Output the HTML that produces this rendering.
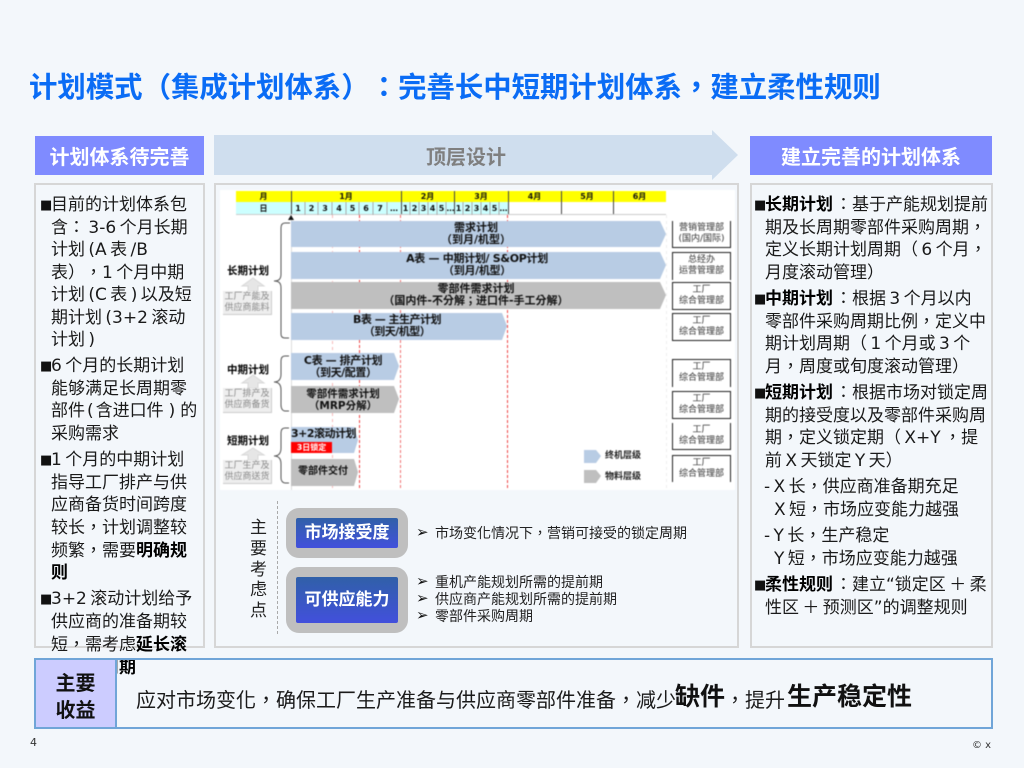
<!DOCTYPE html>
<html lang="zh-TW"><head><meta charset="utf-8"><style>
html,body{margin:0;padding:0;width:1024px;height:768px;overflow:hidden;background:#f3f7fb}
body{position:relative;font-family:"DejaVu Sans","Noto Sans CJK TC",sans-serif;color:#111;text-spacing-trim:space-all;font-kerning:none}
.a{position:absolute}
.t{position:absolute;white-space:nowrap;line-height:1}
.c{transform:translateX(-50%);text-align:center}
.l{font-size:17px;color:#1a1a1a;word-spacing:-2px;margin-top:2px}
.q{display:inline-block;width:11px;font-size:13px;vertical-align:1px;color:#111}
b{font-weight:bold;color:#000}
.k{margin-right:2px}
.panel{position:absolute;border:2px solid #d6d6d6;box-sizing:border-box;top:183px;height:465px}
.head{position:absolute;top:136px;height:39px;background:#7f8bff;color:#fff;font-weight:bold;font-size:20px;line-height:43px;text-align:center}
.d{font-size:8px;font-weight:bold;text-align:center;line-height:12px;position:absolute;top:203px;height:12px}
.m{position:absolute;top:191px;font-size:8px;font-weight:bold;line-height:12px;text-align:center;height:11px}
.bt{font-size:11px;font-weight:bold;text-align:center;line-height:12px;color:#111}
.rb{position:absolute;left:672px;width:59px;border:1px solid #222;box-sizing:border-box;font-size:9px;text-align:center;line-height:11px;background:#fff;color:#333;padding-top:2px}
.lb{font-size:10.500px;font-weight:bold;color:#000}
.gb{position:absolute;left:223px;width:49px;background:#eee;border-right:1px solid #ccc;border-bottom:1px solid #ccc;box-sizing:border-box;font-size:9px;line-height:11px;text-align:center;color:#888;padding-top:1px}
.inner{position:absolute;left:296px;width:102px;background:linear-gradient(#3060a8,#4250dc);color:#fff;font-weight:bold;font-size:17px;text-align:center;border-radius:2px}
.gray{position:absolute;left:286px;width:122px;background:#bfbfbf;border-radius:13px}
.s{font-size:14px;color:#222}
.ar{font-size:15px;color:#111}
</style></head><body>

<div class="t" style="left:29px;top:74px;font-size:28.400px;font-weight:bold;color:#0a6cf5">计划模式（集成计划体系）：完善长中短期计划体系，建立柔性规则</div>

<div class="head" style="left:35px;width:169px">计划体系待完善</div>
<svg class="a" style="left:214px;top:130px" width="525" height="51"><path d="M0 5H498V0L524 25L498 50V45H0Z" fill="#cfdeee"/></svg>
<div class="t c" style="left:466px;top:147px;font-size:20px;font-weight:bold;color:#7f7f7f">顶层设计</div>
<div class="head" style="left:750px;width:242px">建立完善的计划体系</div>

<div class="panel" style="left:34px;width:171px"></div>
<div class="panel" style="left:214px;width:525px"></div>
<div class="panel" style="left:750px;width:243px"></div>

<!-- left text -->
<div class="t l" style="left:40px;top:195px"><span class="q">■</span>目前的计划体系包</div>
<div class="t l" style="left:51px;top:218px">含： 3-6 个月长期</div>
<div class="t l" style="left:51px;top:240px">计划 (A 表 /B</div>
<div class="t l" style="left:51px;top:263px">表），1 个月中期</div>
<div class="t l" style="left:51px;top:285px">计划 (C 表 ) 以及短</div>
<div class="t l" style="left:51px;top:308px">期计划 (3+2 滚动</div>
<div class="t l" style="left:51px;top:330px">计划 )</div>
<div class="t l" style="left:40px;top:356px"><span class="q">■</span>6 个月的长期计划</div>
<div class="t l" style="left:51px;top:379px">能够满足长周期零</div>
<div class="t l" style="left:51px;top:401px">部件<span style="margin:0 2px">(</span>含进口件<span style="margin:0 5px">)</span>的</div>
<div class="t l" style="left:51px;top:424px">采购需求</div>
<div class="t l" style="left:40px;top:450px"><span class="q">■</span>1 个月的中期计划</div>
<div class="t l" style="left:51px;top:473px">指导工厂排产与供</div>
<div class="t l" style="left:51px;top:495px">应商备货时间跨度</div>
<div class="t l" style="left:51px;top:518px">较长，计划调整较</div>
<div class="t l" style="left:51px;top:541px">频繁，需要<b>明确规</b></div>
<div class="t l" style="left:51px;top:563px"><b>则</b></div>
<div class="t l" style="left:40px;top:589px"><span class="q">■</span>3+2 滚动计划给予</div>
<div class="t l" style="left:51px;top:612px">供应商的准备期较</div>
<div class="t l" style="left:51px;top:635px">短，需考虑<b>延长滚</b></div>
<div class="t l" style="left:51px;top:658px"><b>动计划周期</b></div>

<!-- right text -->
<div class="t l" style="left:754px;top:195px"><span class="q">■</span><b class="k">长期计划</b>：基于产能规划提前</div>
<div class="t l" style="left:765px;top:218px">期及长周期零部件采购周期，</div>
<div class="t l" style="left:765px;top:240px">定义长期计划周期（ 6 个月，</div>
<div class="t l" style="left:765px;top:263px">月度滚动管理）</div>
<div class="t l" style="left:754px;top:289px"><span class="q">■</span><b class="k">中期计划</b>：根据 3 个月以内</div>
<div class="t l" style="left:765px;top:312px">零部件采购周期比例，定义中</div>
<div class="t l" style="left:765px;top:334px">期计划周期（ 1 个月或 3 个</div>
<div class="t l" style="left:765px;top:357px">月，周度或旬度滚动管理）</div>
<div class="t l" style="left:754px;top:383px"><span class="q">■</span><b class="k">短期计划</b>：根据市场对锁定周</div>
<div class="t l" style="left:765px;top:406px">期的接受度以及零部件采购周</div>
<div class="t l" style="left:765px;top:428px">期，定义锁定期（ X+Y ，提</div>
<div class="t l" style="left:765px;top:451px">前 X 天锁定 Y 天）</div>
<div class="t l" style="left:764px;top:477px">- X 长，供应商准备期充足</div>
<div class="t l" style="left:774px;top:500px">X 短，市场应变能力越强</div>
<div class="t l" style="left:764px;top:526px">- Y 长，生产稳定</div>
<div class="t l" style="left:774px;top:549px">Y 短，市场应变能力越强</div>
<div class="t l" style="left:754px;top:575px"><span class="q">■</span><b class="k">柔性规则</b>：建立“锁定区 ＋ 柔</div>
<div class="t l" style="left:765px;top:598px">性区 ＋ 预测区”的调整规则</div>

<!-- diagram -->
<div class="a" style="left:0;top:0;width:1024px;height:490px;filter:blur(.45px)">
<div class="a" style="left:220px;top:190px;width:515px;height:300px;background:#fff"></div>
<div class="a" style="left:236px;top:191px;width:430px;height:11px;background:#ff0"></div>
<div class="a" style="left:236px;top:202px;width:272px;height:13px;background:#ccffff"></div>
<div class="a" style="left:508px;top:202px;width:158px;height:13px;background:#fff"></div>
<svg class="a" style="left:220px;top:190px" width="515" height="300">
<g stroke="#444" stroke-width="1" fill="none">
<path d="M71.5 1V25M181.5 1V25M234.5 1V25M288.5 1V25M341.500 1V25M393.500 1V25"/>
<path d="M16 24.500H446" stroke="#ccc"/>
<path d="M85 12V25M98 12V25M112 12V25M126 12V25M139 12V25M153 12V25M167 12V25M190 12V25M199 12V25M208 12V25M217 12V25M226 12V25M243 12V25M252 12V25M261 12V25M270 12V25M279 12V25" stroke="#aaa"/>
</g>
<g fill="none">
<path d="M71.500 25V300" stroke="#ddd"/>
<path d="M112.500 25V300" stroke="#f6b8b8" stroke-dasharray="3 3"/>
<path d="M139.500 25V300" stroke="#ee4444" stroke-dasharray="3 2"/>
<path d="M180.500 25V300" stroke="#f07070" stroke-dasharray="3 2"/>
<path d="M287.500 25V300" stroke="#ee4444" stroke-dasharray="3 2"/>
<path d="M446.500 25V300" stroke="#eee" stroke-dasharray="3 3"/>
</g>
<path d="M68 30L71 25L74 30Z" fill="#111"/>
<g stroke="#555" stroke-width="1" fill="none">
<path d="M70 33H65C62 33 61 35 61 38V84C61 89 59 91 54 91C59 91 61 93 61 98V144C61 147 63 148 65 148H69"/>
<path d="M69 166H65C62 166 61 168 61 171V184C61 189 59 192 54 192C59 192 61 195 61 200V215C61 219 63 221 65 221H69"/>
<path d="M69 238H65C62 238 61 240 61 243V258C61 263 59 266 54 266C59 266 61 269 61 274V288C61 291 63 293 65 293H69"/>
</g>
<g fill="#b8cce4">
<path d="M71 31H440L446 44L440 57H71Z"/><path d="M71 62H440L446 75L440 89H71Z"/><path d="M71 123H282L287 136L282 150H71Z"/><path d="M71 163H174L179 176L174 190H71Z"/><path d="M71 237H134L138 250L134 263H71Z"/><path d="M364 260H376L381 266L376 273H364Z"/>
</g>
<g fill="#bfbfbf">
<path d="M71 92H440L446 105L440 119H71Z"/><path d="M71 196H174L179 209L174 223H71Z"/><path d="M71 269H134L138 282L134 296H71Z"/><path d="M364 280H376L381 286L376 293H364Z"/>
</g>
<g fill="#e6e6e6" stroke="#d8d8d8">
<path d="M28 101V96H22L33 88L44 96H38V101Z"/><path d="M28 198V193H22L33 185L44 193H38V198Z"/><path d="M28 270V265H22L33 258L44 265H38V270Z"/>
</g>
</svg>
<div class="t m" style="left:236px;width:55px">月</div>
<div class="t m" style="left:291px;width:110px">1月</div>
<div class="t m" style="left:401px;width:53px">2月</div>
<div class="t m" style="left:454px;width:54px">3月</div>
<div class="t m" style="left:508px;width:53px">4月</div>
<div class="t m" style="left:561px;width:52px">5月</div>
<div class="t m" style="left:613px;width:53px">6月</div>
<div class="d" style="left:236px;width:55px">日</div>
<div class="d" style="left:291px;width:14px">1</div><div class="d" style="left:305px;width:13px">2</div><div class="d" style="left:318px;width:14px">3</div><div class="d" style="left:332px;width:14px">4</div><div class="d" style="left:346px;width:13px">5</div><div class="d" style="left:359px;width:14px">6</div><div class="d" style="left:373px;width:14px">7</div><div class="d" style="left:387px;width:14px">…</div>
<div class="d" style="left:401px;width:9px">1</div><div class="d" style="left:410px;width:9px">2</div><div class="d" style="left:419px;width:9px">3</div><div class="d" style="left:428px;width:9px">4</div><div class="d" style="left:437px;width:9px">5</div><div class="d" style="left:446px;width:9px">…</div>
<div class="d" style="left:454px;width:9px">1</div><div class="d" style="left:463px;width:9px">2</div><div class="d" style="left:472px;width:9px">3</div><div class="d" style="left:481px;width:9px">4</div><div class="d" style="left:490px;width:9px">5</div><div class="d" style="left:499px;width:9px">…</div>

<div class="t bt c" style="left:476px;top:222px;white-space:pre-line">需求计划
（到月/机型）</div>
<div class="t bt c" style="left:477px;top:253px;white-space:pre-line;letter-spacing:-.3px">A表 — 中期计划/ S&amp;OP计划
（到月/机型）</div>
<div class="t bt c" style="left:476px;top:283px;white-space:pre-line">零部件需求计划
（国内件-不分解；进口件-手工分解）</div>
<div class="t bt c" style="left:397px;top:314px;white-space:pre-line;letter-spacing:-.5px">B表 — 主生产计划
（到天/机型）</div>
<div class="t bt c" style="left:343px;top:355px;white-space:pre-line;letter-spacing:-.4px">C表 — 排产计划
（到天/配置）</div>
<div class="t bt c" style="left:343px;top:388px;white-space:pre-line;font-size:10.500px">零部件需求计划
（MRP分解）</div>
<div class="t bt" style="left:291px;top:428px;letter-spacing:-.5px">3+2滚动计划</div>
<div class="a" style="left:291px;top:442px;width:41px;height:11px;background:#f00;color:#fff;font-size:8px;font-weight:bold;line-height:11px;text-align:center">3日锁定</div>
<div class="t bt c" style="left:323px;top:466px;font-size:10px">零部件交付</div>

<div class="t lb c" style="left:248px;top:266px">长期计划</div>
<div class="t lb c" style="left:248px;top:365px">中期计划</div>
<div class="t lb c" style="left:248px;top:436px">短期计划</div>
<div class="gb" style="top:291px;height:24px">工厂产能及<br>供应商能料</div>
<div class="gb" style="top:388px;height:25px">工厂排产及<br>供应商备货</div>
<div class="gb" style="top:460px;height:24px">工厂生产及<br>供应商送货</div>

<div class="rb" style="top:221px;height:27px;border-top:0">营销管理部<br>(国内/国际)</div>
<div class="rb" style="top:252px;height:28px;border-bottom:0">总经办<br>运营管理部</div>
<div class="rb" style="top:282px;height:28px">工厂<br>综合管理部</div>
<div class="rb" style="top:313px;height:28px">工厂<br>综合管理部</div>
<div class="rb" style="top:359px;height:28px;border-bottom:0">工厂<br>综合管理部</div>
<div class="rb" style="top:391px;height:28px">工厂<br>综合管理部</div>
<div class="rb" style="top:423px;height:27px;border-top:0">工厂<br>综合管理部</div>
<div class="rb" style="top:455px;height:27px;border-bottom:0">工厂<br>综合管理部</div>
<div class="t" style="left:605px;top:452px;font-size:9px;font-weight:bold;color:#222">终机层级</div>
<div class="t" style="left:605px;top:473px;font-size:9px;font-weight:bold;color:#222">物料层级</div>
</div>

<!-- considerations -->
<div class="t" style="left:250px;top:518px;font-size:17px;line-height:20.800px;white-space:pre-line;color:#222">主
要
考
虑
点</div>
<div class="a" style="left:277px;top:501px;height:133px;border-left:1px dashed #aaa"></div>
<div class="gray" style="top:508px;height:50px"></div>
<div class="inner" style="top:518px;height:30px;line-height:31px">市场接受度</div>
<div class="gray" style="top:567px;height:66px"></div>
<div class="inner" style="top:577px;height:46px;line-height:46px">可供应能力</div>
<div class="t ar" style="left:416px;top:525px">➢</div>
<div class="t s" style="left:435px;top:527px">市场变化情况下，营销可接受的锁定周期</div>
<div class="t ar" style="left:416px;top:574px">➢</div>
<div class="t s" style="left:435px;top:576px">重机产能规划所需的提前期</div>
<div class="t ar" style="left:416px;top:591px">➢</div>
<div class="t s" style="left:435px;top:593px">供应商产能规划所需的提前期</div>
<div class="t ar" style="left:416px;top:608px">➢</div>
<div class="t s" style="left:435px;top:610px">零部件采购周期</div>

<!-- bottom -->
<div class="a" style="left:34px;top:658px;width:959px;height:71px;border:2px solid #70a5d8;box-sizing:border-box"></div>
<div class="a" style="left:36px;top:660px;width:79px;background:#ccccff;border-right:2px solid #70a5d8;text-align:center;font-size:20px;font-weight:bold;line-height:27px;padding-top:10px;height:57px;color:#111">主要<br>收益</div>
<div class="t" style="left:136px;top:690px;font-size:20px;color:#1a1a1a">应对市场变化，确保工厂生产准备与供应商零部件准备，减少</div>
<div class="t" style="left:675px;top:684px;font-size:25px;font-weight:bold;color:#111">缺件</div>
<div class="t" style="left:725px;top:690px;font-size:20px;color:#1a1a1a">，提升</div>
<div class="t" style="left:787px;top:684px;font-size:25px;font-weight:bold;color:#111">生产稳定性</div>

<div class="t" style="left:30px;top:737px;font-size:11px;color:#333">4</div>
<div class="t" style="left:972px;top:741px;font-size:10px;color:#333">© x</div>
</body></html>
